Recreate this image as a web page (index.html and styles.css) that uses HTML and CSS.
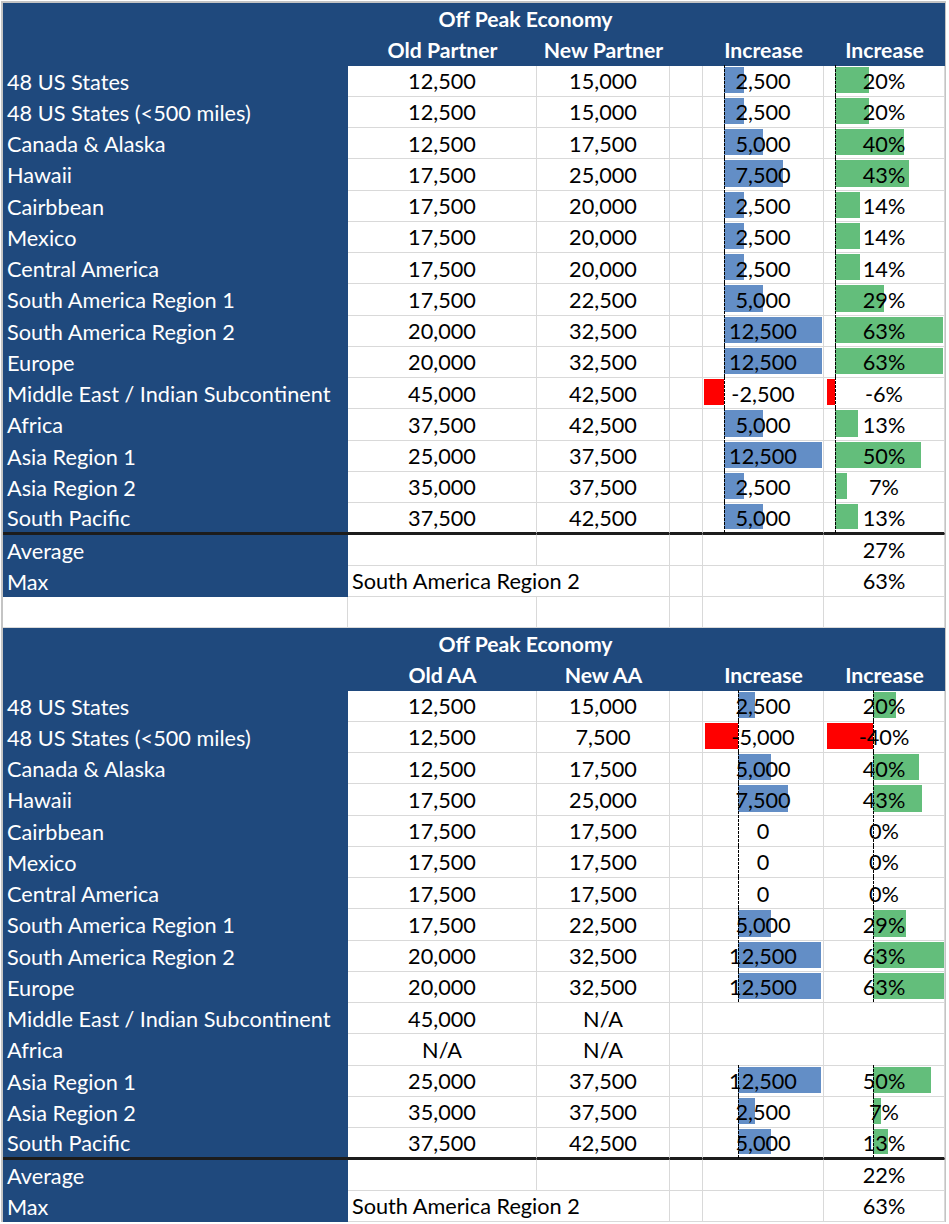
FILE: index.html
```html
<!DOCTYPE html>
<html>
<head>
<meta charset="utf-8">
<link rel="stylesheet" href="styles.css">
</head>
<body>
<div class="sheet">
  <div class="grid t1">
    <div class="h"></div><div class="h title">Off Peak Economy</div><div class="h span2"></div>
    <div class="h"></div><div class="h hd">Old Partner</div><div class="h hd">New Partner</div><div class="h"></div><div class="h hd">Increase</div><div class="h hd">Increase</div>

    <div class="lbl">48 US States</div><div class="c">12,500</div><div class="c">15,000</div><div class="c"></div><div class="c bc"><i class="ax"></i><span class="bar pos" style="width:19.6px"></span><span class="v">2,500</span></div><div class="c bc pc"><i class="ax"></i><span class="bar gpos" style="width:34.4px"></span><span class="v">20%</span></div>
    <div class="lbl">48 US States (&lt;500 miles)</div><div class="c">12,500</div><div class="c">15,000</div><div class="c"></div><div class="c bc"><i class="ax"></i><span class="bar pos" style="width:19.6px"></span><span class="v">2,500</span></div><div class="c bc pc"><i class="ax"></i><span class="bar gpos" style="width:34.4px"></span><span class="v">20%</span></div>
    <div class="lbl">Canada &amp; Alaska</div><div class="c">12,500</div><div class="c">17,500</div><div class="c"></div><div class="c bc"><i class="ax"></i><span class="bar pos" style="width:39.2px"></span><span class="v">5,000</span></div><div class="c bc pc"><i class="ax"></i><span class="bar gpos" style="width:68.8px"></span><span class="v">40%</span></div>
    <div class="lbl">Hawaii</div><div class="c">17,500</div><div class="c">25,000</div><div class="c"></div><div class="c bc"><i class="ax"></i><span class="bar pos" style="width:58.8px"></span><span class="v">7,500</span></div><div class="c bc pc"><i class="ax"></i><span class="bar gpos" style="width:73.7px"></span><span class="v">43%</span></div>
    <div class="lbl">Cairbbean</div><div class="c">17,500</div><div class="c">20,000</div><div class="c"></div><div class="c bc"><i class="ax"></i><span class="bar pos" style="width:19.6px"></span><span class="v">2,500</span></div><div class="c bc pc"><i class="ax"></i><span class="bar gpos" style="width:24.6px"></span><span class="v">14%</span></div>
    <div class="lbl">Mexico</div><div class="c">17,500</div><div class="c">20,000</div><div class="c"></div><div class="c bc"><i class="ax"></i><span class="bar pos" style="width:19.6px"></span><span class="v">2,500</span></div><div class="c bc pc"><i class="ax"></i><span class="bar gpos" style="width:24.6px"></span><span class="v">14%</span></div>
    <div class="lbl">Central America</div><div class="c">17,500</div><div class="c">20,000</div><div class="c"></div><div class="c bc"><i class="ax"></i><span class="bar pos" style="width:19.6px"></span><span class="v">2,500</span></div><div class="c bc pc"><i class="ax"></i><span class="bar gpos" style="width:24.6px"></span><span class="v">14%</span></div>
    <div class="lbl">South America Region 1</div><div class="c">17,500</div><div class="c">22,500</div><div class="c"></div><div class="c bc"><i class="ax"></i><span class="bar pos" style="width:39.2px"></span><span class="v">5,000</span></div><div class="c bc pc"><i class="ax"></i><span class="bar gpos" style="width:49.1px"></span><span class="v">29%</span></div>
    <div class="lbl">South America Region 2</div><div class="c">20,000</div><div class="c">32,500</div><div class="c"></div><div class="c bc"><i class="ax"></i><span class="bar pos" style="width:98px"></span><span class="v">12,500</span></div><div class="c bc pc"><i class="ax"></i><span class="bar gpos" style="width:107.5px"></span><span class="v">63%</span></div>
    <div class="lbl">Europe</div><div class="c">20,000</div><div class="c">32,500</div><div class="c"></div><div class="c bc"><i class="ax"></i><span class="bar pos" style="width:98px"></span><span class="v">12,500</span></div><div class="c bc pc"><i class="ax"></i><span class="bar gpos" style="width:107.5px"></span><span class="v">63%</span></div>
    <div class="lbl">Middle East / Indian Subcontinent</div><div class="c">45,000</div><div class="c">42,500</div><div class="c"></div><div class="c bc"><i class="ax"></i><span class="bar neg" style="width:19.6px"></span><span class="v">-2,500</span></div><div class="c bc pc"><i class="ax"></i><span class="bar neg" style="width:8.5px"></span><span class="v">-6%</span></div>
    <div class="lbl">Africa</div><div class="c">37,500</div><div class="c">42,500</div><div class="c"></div><div class="c bc"><i class="ax"></i><span class="bar pos" style="width:39.2px"></span><span class="v">5,000</span></div><div class="c bc pc"><i class="ax"></i><span class="bar gpos" style="width:22.9px"></span><span class="v">13%</span></div>
    <div class="lbl">Asia Region 1</div><div class="c">25,000</div><div class="c">37,500</div><div class="c"></div><div class="c bc"><i class="ax"></i><span class="bar pos" style="width:98px"></span><span class="v">12,500</span></div><div class="c bc pc"><i class="ax"></i><span class="bar gpos" style="width:86px"></span><span class="v">50%</span></div>
    <div class="lbl">Asia Region 2</div><div class="c">35,000</div><div class="c">37,500</div><div class="c"></div><div class="c bc"><i class="ax"></i><span class="bar pos" style="width:19.6px"></span><span class="v">2,500</span></div><div class="c bc pc"><i class="ax"></i><span class="bar gpos" style="width:12.3px"></span><span class="v">7%</span></div>
    <div class="lbl last">South Pacific</div><div class="c last">37,500</div><div class="c last">42,500</div><div class="c last"></div><div class="c bc last"><i class="ax"></i><span class="bar pos" style="width:39.2px"></span><span class="v">5,000</span></div><div class="c bc pc last"><i class="ax"></i><span class="bar gpos" style="width:22.9px"></span><span class="v">13%</span></div>

    <div class="lbl sum">Average</div><div class="c sum"></div><div class="c sum"></div><div class="c sum"></div><div class="c sum"></div><div class="c sum">27%</div>
    <div class="lbl">Max</div><div class="c span2 left">South America Region 2</div><div class="c"></div><div class="c"></div><div class="c">63%</div>
    <div class="c"></div><div class="c"></div><div class="c"></div><div class="c"></div><div class="c"></div><div class="c"></div>
  </div>

  <div class="grid t2">
    <div class="h"></div><div class="h title">Off Peak Economy</div><div class="h span2"></div>
    <div class="h"></div><div class="h hd">Old AA</div><div class="h hd">New AA</div><div class="h"></div><div class="h hd">Increase</div><div class="h hd">Increase</div>

    <div class="lbl">48 US States</div><div class="c">12,500</div><div class="c">15,000</div><div class="c"></div><div class="c bc"><i class="ax"></i><span class="bar pos" style="width:16.5px"></span><span class="v">2,500</span></div><div class="c bc pc"><i class="ax"></i><span class="bar gpos" style="width:23px"></span><span class="v">20%</span></div>
    <div class="lbl">48 US States (&lt;500 miles)</div><div class="c">12,500</div><div class="c">7,500</div><div class="c"></div><div class="c bc"><i class="ax"></i><span class="bar neg" style="width:33px"></span><span class="v">-5,000</span></div><div class="c bc pc"><i class="ax"></i><span class="bar neg" style="width:46px"></span><span class="v">-40%</span></div>
    <div class="lbl">Canada &amp; Alaska</div><div class="c">12,500</div><div class="c">17,500</div><div class="c"></div><div class="c bc"><i class="ax"></i><span class="bar pos" style="width:33px"></span><span class="v">5,000</span></div><div class="c bc pc"><i class="ax"></i><span class="bar gpos" style="width:46px"></span><span class="v">40%</span></div>
    <div class="lbl">Hawaii</div><div class="c">17,500</div><div class="c">25,000</div><div class="c"></div><div class="c bc"><i class="ax"></i><span class="bar pos" style="width:49.5px"></span><span class="v">7,500</span></div><div class="c bc pc"><i class="ax"></i><span class="bar gpos" style="width:49.3px"></span><span class="v">43%</span></div>
    <div class="lbl">Cairbbean</div><div class="c">17,500</div><div class="c">17,500</div><div class="c"></div><div class="c bc"><i class="ax"></i><span class="v">0</span></div><div class="c bc pc"><i class="ax"></i><span class="v">0%</span></div>
    <div class="lbl">Mexico</div><div class="c">17,500</div><div class="c">17,500</div><div class="c"></div><div class="c bc"><i class="ax"></i><span class="v">0</span></div><div class="c bc pc"><i class="ax"></i><span class="v">0%</span></div>
    <div class="lbl">Central America</div><div class="c">17,500</div><div class="c">17,500</div><div class="c"></div><div class="c bc"><i class="ax"></i><span class="v">0</span></div><div class="c bc pc"><i class="ax"></i><span class="v">0%</span></div>
    <div class="lbl">South America Region 1</div><div class="c">17,500</div><div class="c">22,500</div><div class="c"></div><div class="c bc"><i class="ax"></i><span class="bar pos" style="width:33px"></span><span class="v">5,000</span></div><div class="c bc pc"><i class="ax"></i><span class="bar gpos" style="width:32.9px"></span><span class="v">29%</span></div>
    <div class="lbl">South America Region 2</div><div class="c">20,000</div><div class="c">32,500</div><div class="c"></div><div class="c bc"><i class="ax"></i><span class="bar pos" style="width:82.5px"></span><span class="v">12,500</span></div><div class="c bc pc"><i class="ax"></i><span class="bar gpos" style="width:71.9px"></span><span class="v">63%</span></div>
    <div class="lbl">Europe</div><div class="c">20,000</div><div class="c">32,500</div><div class="c"></div><div class="c bc"><i class="ax"></i><span class="bar pos" style="width:82.5px"></span><span class="v">12,500</span></div><div class="c bc pc"><i class="ax"></i><span class="bar gpos" style="width:71.9px"></span><span class="v">63%</span></div>
    <div class="lbl">Middle East / Indian Subcontinent</div><div class="c">45,000</div><div class="c">N/A</div><div class="c"></div><div class="c"></div><div class="c"></div>
    <div class="lbl">Africa</div><div class="c">N/A</div><div class="c">N/A</div><div class="c"></div><div class="c"></div><div class="c"></div>
    <div class="lbl">Asia Region 1</div><div class="c">25,000</div><div class="c">37,500</div><div class="c"></div><div class="c bc"><i class="ax"></i><span class="bar pos" style="width:82.5px"></span><span class="v">12,500</span></div><div class="c bc pc"><i class="ax"></i><span class="bar gpos" style="width:57.5px"></span><span class="v">50%</span></div>
    <div class="lbl">Asia Region 2</div><div class="c">35,000</div><div class="c">37,500</div><div class="c"></div><div class="c bc"><i class="ax"></i><span class="bar pos" style="width:16.5px"></span><span class="v">2,500</span></div><div class="c bc pc"><i class="ax"></i><span class="bar gpos" style="width:8.2px"></span><span class="v">7%</span></div>
    <div class="lbl last">South Pacific</div><div class="c last">37,500</div><div class="c last">42,500</div><div class="c last"></div><div class="c bc last"><i class="ax"></i><span class="bar pos" style="width:33px"></span><span class="v">5,000</span></div><div class="c bc pc last"><i class="ax"></i><span class="bar gpos" style="width:15.3px"></span><span class="v">13%</span></div>

    <div class="lbl sum">Average</div><div class="c sum"></div><div class="c sum"></div><div class="c sum"></div><div class="c sum"></div><div class="c sum">22%</div>
    <div class="lbl">Max</div><div class="c span2 left">South America Region 2</div><div class="c"></div><div class="c"></div><div class="c">63%</div>
  </div>
</div>
</body>
</html>
```

FILE: styles.css
```css
html, body {
  margin: 0;
  padding: 0;
  background: #fff;
}

.sheet {
  margin: 1px 0 0 1px;
  width: 942px;
  border-top: 2px solid #c4c4c4;
  border-left: 2px solid #c4c4c4;
  border-right: 1px solid #c4c4c4;
  font-family: Lato, "Liberation Sans", sans-serif;
  font-size: 21.7px;
  color: #000;
}

.grid {
  display: grid;
  grid-template-columns: 345px 189px 133px 33px 121px 121px;
  grid-auto-rows: 31.25px;
}

.h {
  box-sizing: border-box;
  padding-top: 1px;
  background: #1f497d;
  color: #fff;
  font-weight: bold;
  font-size: 21.2px;
  display: flex;
  align-items: center;
  justify-content: center;
  white-space: nowrap;
}

.title {
  grid-column: span 3;
}

.span2 {
  grid-column: span 2;
}

.lbl {
  box-sizing: border-box;
  background: #1f497d;
  color: #fff;
  display: flex;
  align-items: center;
  padding: 1px 0 0 4px;
  white-space: nowrap;
}

.c {
  box-sizing: border-box;
  padding-top: 1px;
  border-right: 1px solid #d9d9d9;
  border-bottom: 1px solid #d9d9d9;
  background: #fff;
  display: flex;
  align-items: center;
  justify-content: center;
  white-space: nowrap;
}

.c.left {
  justify-content: flex-start;
  padding-left: 4px;
}

.lbl.last, .c.last {
  border-bottom: 2px solid #1c1c1c;
}

.lbl.sum, .c.sum {
  border-top: 1px solid #1c1c1c;
}

.bc {
  position: relative;
  --axis: 21px;
}

.t1 .pc { --axis: 11px; }
.t2 .bc { --axis: 35px; }
.t2 .pc { --axis: 49px; }

.ax {
  position: absolute;
  left: var(--axis);
  top: -1px;
  bottom: -1px;
  width: 1px;
  background: repeating-linear-gradient(to bottom, #000 0 3px, transparent 3px 4px);
  z-index: 2;
}

.bar {
  position: absolute;
  top: 1px;
  bottom: 3px;
  z-index: 0;
}

.bar.pos {
  left: var(--axis);
  background: #638ec6;
}

.bar.gpos {
  left: var(--axis);
  background: #63be7b;
}

.bar.neg {
  right: calc(100% - var(--axis));
  background: #ff0000;
}

.pc .bar.gpos {
  max-width: calc(100% - var(--axis));
}

.v {
  position: relative;
  z-index: 1;
}
```
